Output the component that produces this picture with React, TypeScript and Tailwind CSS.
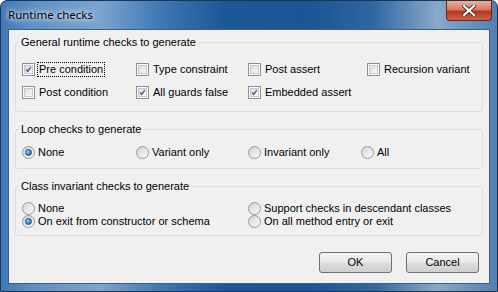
import React, { useState } from 'react';

const font = { fontFamily: '"Liberation Sans", Arial, sans-serif' };

function CheckBox({ checked, label, focus, onClick }: any) {
  return (
    <div className="flex items-center h-[16px] cursor-default" onClick={onClick}>
      <span className="w-[13px] h-[13px] border border-[#8f8f8f] bg-white p-[1px] shrink-0">
        <span className="flex items-center justify-center w-full h-full border border-[#c8c8c8] bg-gradient-to-br from-[#dcdcdc] to-[#f8f8f8]">
          {checked && (
            <svg width="9" height="9" viewBox="0 0 9 9">
              <path d="M1.5 4.5 L3.5 7 L7.5 1.5" fill="none" stroke="#3f5a8c" strokeWidth="1.7" />
            </svg>
          )}
        </span>
      </span>
      <span className={`ml-[2px] px-[1px] leading-[13px] ${focus ? 'border border-dotted border-black' : 'border border-transparent'}`}>{label}</span>
    </div>
  );
}

function Radio({ checked, label, onClick }: any) {
  return (
    <div className="flex items-center h-[13px] cursor-default" onClick={onClick}>
      <span className="w-[13px] h-[13px] rounded-full border border-[#8f9aa3] bg-gradient-to-br from-[#d4d4d4] to-[#fbfbfb] flex items-center justify-center shrink-0">
        {checked && <span className="w-[7px] h-[7px] rounded-full border border-[#1b4f82] bg-[radial-gradient(circle_at_35%_35%,#9fdcff,#2a7fc8_60%,#154d85)]" />}
      </span>
      <span className="ml-[3px] leading-[13px]">{label}</span>
    </div>
  );
}

function Group({ title, children, className }: any) {
  return (
    <fieldset className={`border border-[#d5dfe5] rounded-[3px] mx-[6px] ${className || ''}`}>
      <legend className="ml-[3px] px-[2px] leading-[13px]">{title}</legend>
      {children}
    </fieldset>
  );
}

export default function App() {
  const [checks, setChecks] = useState<Record<string, boolean>>({
    pre: true, type: false, postAssert: false, recursion: false,
    post: false, guards: true, embedded: true,
  });
  const [loop, setLoop] = useState('none');
  const [inv, setInv] = useState('exit');
  const t = (k: string) => setChecks({ ...checks, [k]: !checks[k] });

  return (
    <div className="w-[498px] h-[292px] text-[11px] text-black select-none" style={font}>
      <div className="w-full h-full rounded-t-[7px] border border-[#1b3553] bg-[linear-gradient(90deg,#3f78b6_0%,#5d8fc4_6%,#7aa5d0_20%,#3f78b3_32%,#1d5896_45%,#1b5593_62%,#2f67a1_75%,#8aa9c8_88%,#4f80b5_100%)] flex flex-col">
        <div className="h-[28px] flex items-start shrink-0">
          <div className="pl-[7px] pt-[6px] text-[11.5px] leading-[16px] text-black [text-shadow:0_0_8px_#ffffff,0_0_4px_#ffffff]" style={{ fontFamily: '"Noto Sans", "Open Sans", sans-serif' }}>
            Runtime checks
          </div>
          <div className="ml-auto mr-[5px] w-[46px] h-[20px] rounded-b-[4px] border border-t-0 border-[#5b2a24] bg-[linear-gradient(180deg,#eab1a0_0%,#d77a64_45%,#b83520_55%,#cf6447_100%)] flex items-center justify-center">
            <svg width="14" height="11" viewBox="0 0 14 11">
              <path d="M2 1 L12 10 M12 1 L2 10" stroke="#4a2a24" strokeWidth="4" strokeLinecap="square" />
              <path d="M2 1 L12 10 M12 1 L2 10" stroke="#ffffff" strokeWidth="2.2" strokeLinecap="square" />
            </svg>
          </div>
        </div>
        <div className="mx-[7px] flex-1 border border-[#3d5f84] bg-[#f0f0f0] flex flex-col pt-[6px]">
          <Group title="General runtime checks to generate" className="pb-[11px]">
            <div className="grid grid-cols-[114px_112px_119px_auto] gap-y-[7px] pl-[6px] pt-[12px]">
              <CheckBox checked={checks.pre} label="Pre condition" focus onClick={() => t('pre')} />
              <CheckBox checked={checks.type} label="Type constraint" onClick={() => t('type')} />
              <CheckBox checked={checks.postAssert} label="Post assert" onClick={() => t('postAssert')} />
              <CheckBox checked={checks.recursion} label="Recursion variant" onClick={() => t('recursion')} />
              <CheckBox checked={checks.post} label="Post condition" onClick={() => t('post')} />
              <CheckBox checked={checks.guards} label="All guards false" onClick={() => t('guards')} />
              <CheckBox checked={checks.embedded} label="Embedded assert" onClick={() => t('embedded')} />
            </div>
          </Group>
          <Group title="Loop checks to generate" className="mt-[11px] pb-[9px]">
            <div className="grid grid-cols-[114px_112px_113px_auto] pl-[6px] pt-[10px]">
              {[['none', 'None'], ['variant', 'Variant only'], ['invariant', 'Invariant only'], ['all', 'All']].map(([k, l]) => (
                <Radio key={k} checked={loop === k} label={l} onClick={() => setLoop(k)} />
              ))}
            </div>
          </Group>
          <Group title="Class invariant checks to generate" className="mt-[11px] pb-[7px]">
            <div className="grid grid-cols-[226px_auto] pl-[6px] pt-[9px]">
              <Radio checked={inv === 'none'} label="None" onClick={() => setInv('none')} />
              <Radio checked={inv === 'support'} label="Support checks in descendant classes" onClick={() => setInv('support')} />
              <Radio checked={inv === 'exit'} label="On exit from constructor or schema" onClick={() => setInv('exit')} />
              <Radio checked={inv === 'all'} label="On all method entry or exit" onClick={() => setInv('all')} />
            </div>
          </Group>
          <div className="flex justify-end gap-[14px] mt-auto mb-[10px] mr-[10px]">
            {['OK', 'Cancel'].map((b) => (
              <button key={b} className="w-[73px] h-[21px] rounded-[3px] border border-[#707070] bg-[linear-gradient(180deg,#f2f2f2_0%,#ebebeb_48%,#dddddd_52%,#cfcfcf_100%)] text-[11px] leading-[19px]">
                {b}
              </button>
            ))}
          </div>
        </div>
        <div className="h-[7px] shrink-0" />
      </div>
    </div>
  );
}
